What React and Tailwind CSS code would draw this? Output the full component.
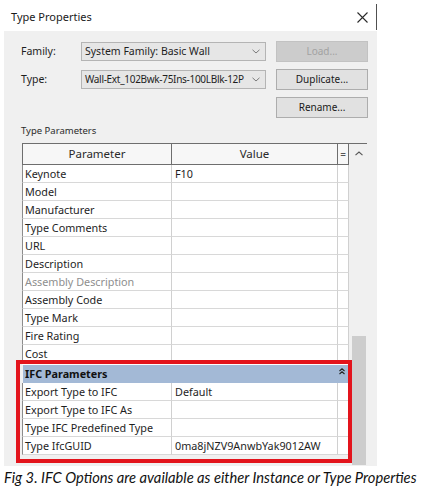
import React from "react";

const rows = [
  ["Keynote", "F10"],
  ["Model", ""],
  ["Manufacturer", ""],
  ["Type Comments", ""],
  ["URL", ""],
  ["Description", ""],
  ["Assembly Description", "", true],
  ["Assembly Code", ""],
  ["Type Mark", ""],
  ["Fire Rating", ""],
  ["Cost", ""],
];

const ifcRows = [
  ["Export Type to IFC", "Default"],
  ["Export Type to IFC As", ""],
  ["Type IFC Predefined Type", ""],
  ["Type IfcGUID", "0ma8jNZV9AnwbYak9012AW"],
];

function Chevron() {
  return (
    <svg width="8" height="5" viewBox="0 0 8 5" className="shrink-0">
      <path d="M0.5 0.8 L4 4 L7.5 0.8" fill="none" stroke="#7a7a7a" strokeWidth="1" />
    </svg>
  );
}

function Row({ p, v, gray }) {
  return (
    <div className="flex h-[18px] bg-white text-[10.8px]">
      <div className={`w-[150px] border-l border-l-[#8c8c8c] border-r border-r-[#d0d0d0] border-b border-b-[#d8d8d8] pl-[2px] leading-[17px] whitespace-nowrap ${gray ? "text-[#8e8e8e]" : "text-[#1e1e1e]"}`}>
        {p}
      </div>
      <div className="w-[166px] border-r border-r-[#d0d0d0] border-b border-b-[#d8d8d8] pl-[3px] leading-[17px] text-[#1e1e1e] whitespace-nowrap">
        {v}
      </div>
      <div className="w-[11px] border-r border-r-[#d0d0d0] border-b border-b-[#d8d8d8]" />
    </div>
  );
}

export default function App() {
  return (
    <div className="w-[424px] h-[490px] bg-white overflow-hidden font-['Noto_Sans',sans-serif] text-[10.5px]">
      {/* title bar */}
      <div className="h-[31px] flex items-center pl-[11px] pr-[47px]">
        <span className="text-[11px] text-[#1a1a1a] mt-[3px]">Type Properties</span>
        <svg width="11" height="11" viewBox="0 0 11 11" className="ml-auto mt-[3px]">
          <path d="M0.5 0.5 L10.5 10.5 M10.5 0.5 L0.5 10.5" stroke="#2a2a2a" strokeWidth="1.1" />
        </svg>
        <div className="w-px h-[26px] bg-[#505050] ml-[8px] self-end mb-px" />
      </div>

      {/* panel */}
      <div className="ml-[4px] w-[373px] h-[435px] bg-[#f0f0f0] pl-[17px] pt-[10px]">
        {/* Family */}
        <div className="flex items-center h-[21px]">
          <span className="w-[60px] text-[#1e1e1e]">Family:</span>
          <div className="w-[185px] h-[19px] border border-[#b4b4b4] bg-[#e6e6e6] flex items-center pl-[3px] pr-[5px]">
            <span className="text-[#1e1e1e] flex-1 whitespace-nowrap">System Family: Basic Wall</span>
            <Chevron />
          </div>
          <div className="ml-[10px] w-[92px] h-[21px] border border-[#c2c2c2] bg-[#cccccc] flex items-center justify-center text-[10px] text-[#a2a2a2]">
            Load...
          </div>
        </div>
        {/* Type */}
        <div className="flex items-center h-[21px] mt-[7px]">
          <span className="w-[60px] text-[#1e1e1e]">Type:</span>
          <div className="w-[185px] h-[19px] border border-[#b4b4b4] bg-[#e6e6e6] flex items-center pl-[3px] pr-[5px]">
            <span className="text-[#1e1e1e] flex-1 whitespace-nowrap text-[10px] tracking-[-0.3px]">Wall-Ext_102Bwk-75Ins-100LBlk-12P</span>
            <Chevron />
          </div>
          <div className="ml-[10px] w-[92px] h-[21px] border border-[#adadad] bg-[#e1e1e1] flex items-center justify-center text-[10px] text-[#1a1a1a]">
            Duplicate...
          </div>
        </div>
        {/* Rename */}
        <div className="flex items-center h-[21px] mt-[7px]">
          <div className="ml-[255px] w-[92px] h-[21px] border border-[#adadad] bg-[#e1e1e1] flex items-center justify-center text-[10px] text-[#1a1a1a]">
            Rename...
          </div>
        </div>

        <div className="mt-[5px] h-[16px] text-[9.5px] text-[#2a2a2a] leading-[16px]">Type Parameters</div>

        {/* table + scrollbar */}
        <div className="ml-px mt-[4px] w-[345px] border-t border-t-[#6e6e6e] flex h-[322px]">
          <div className="w-[327px] flex flex-col">
            {/* header */}
            <div className="flex h-[21px] bg-[#f7f7f7] text-[#2a2a2a]">
              <div className="w-[150px] border-l border-r border-b border-[#6e6e6e] flex items-center justify-center text-[11.5px]">Parameter</div>
              <div className="w-[166px] border-r border-b border-[#6e6e6e] flex items-center justify-center text-[11.5px]">Value</div>
              <div className="w-[11px] border-r border-b border-[#6e6e6e] flex items-center justify-center text-[10px] text-[#555]">=</div>
            </div>
            {rows.map((r) => (
              <Row key={r[0]} p={r[0]} v={r[1]} gray={r[2]} />
            ))}
            {/* IFC section with annotation box */}
            <div className="relative">
              <div className="h-[2px] bg-white" />
              <div className="flex items-center h-[18px] bg-[#a3b9d6] ml-px pl-[2px] pr-[4px]">
                <span className="font-bold text-[#111] text-[10.8px]">IFC Parameters</span>
                <svg width="6" height="7" viewBox="0 0 6 7" className="ml-auto mb-[6px]">
                  <path d="M0.5 3 L3 0.8 L5.5 3 M0.5 6 L3 3.8 L5.5 6" fill="none" stroke="#222" strokeWidth="1.1" />
                </svg>
              </div>
              {ifcRows.map((r) => (
                <Row key={r[0]} p={r[0]} v={r[1]} />
              ))}
              <div className="absolute -left-[6px] -top-[3px] -right-[3px] -bottom-[8px] border-[4px] border-[#e3141c]" />
            </div>
          </div>
          {/* scrollbar */}
          <div className="flex-1 flex flex-col">
            <div className="h-[18px] flex items-center justify-center pl-px">
              <svg width="8" height="5" viewBox="0 0 8 5">
                <path d="M0.5 4.2 L4 1 L7.5 4.2" fill="none" stroke="#555" strokeWidth="1.1" />
              </svg>
            </div>
            <div className="mt-auto ml-[3px] w-[14px] h-[129px] bg-[#cdcdcd]" />
          </div>
        </div>
      </div>

      {/* caption */}
      <div className="pl-[4px] mt-[2px] whitespace-nowrap italic text-[14.7px] leading-[18px] text-[#111] font-['Lato',sans-serif]">
        Fig 3. IFC Options are available as either Instance or Type Properties
      </div>
    </div>
  );
}
